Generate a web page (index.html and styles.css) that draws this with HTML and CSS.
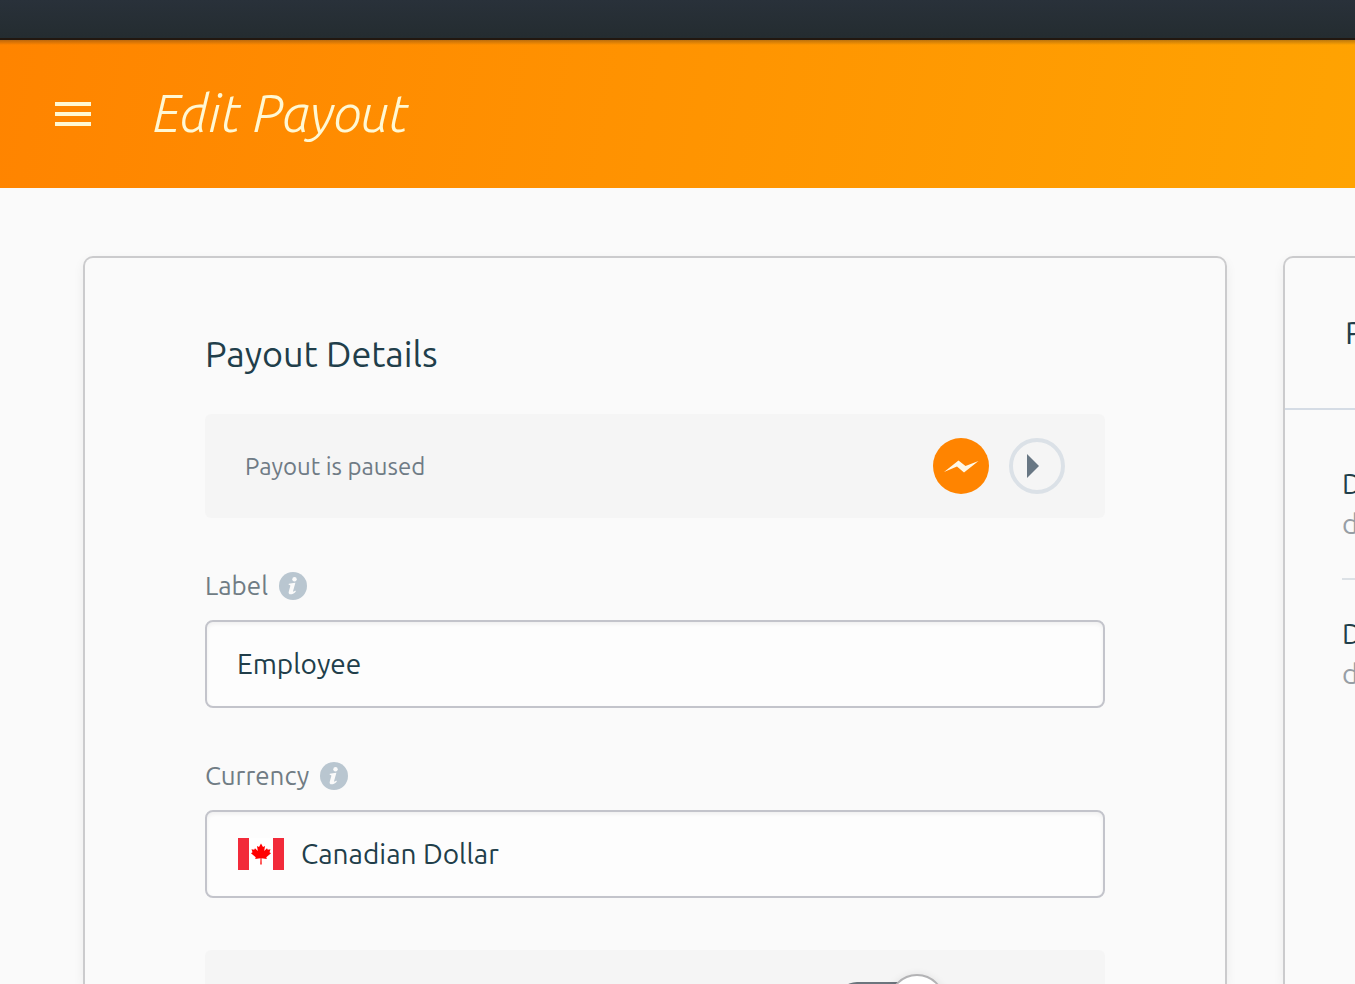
FILE: index.html
```html
<!DOCTYPE html>
<html lang="en">
<head>
<meta charset="utf-8">
<title>Edit Payout</title>
<link rel="stylesheet" href="styles.css">
</head>
<body>
<div class="topbar"></div>
<header class="header">
  <button class="menu" type="button" aria-label="Menu">
    <svg width="36" height="24" viewBox="0 0 36 24"><path fill="currentColor" d="M0 0h36v4H0zM0 10h36v4H0zM0 20h36v4H0z"/></svg>
  </button>
  <h1 class="title">Edit Payout</h1>
</header>
<main class="layout">
  <section class="card details">
    <h2 class="heading">Payout Details</h2>
    <div class="panel status">
      <span class="status-text">Payout is paused</span>
      <button class="round instant" type="button" aria-label="Instant payout">
        <svg width="56" height="56" viewBox="0 0 56 56"><path fill="#fff8e6" d="M11 34 L25.500 22.500 L32.500 28 L45.500 23 L31 34.500 L24 28.500z"/></svg>
      </button>
      <button class="round play" type="button" aria-label="Resume payout">
        <svg width="56" height="56" viewBox="0 0 56 56"><circle cx="28" cy="28" r="26" fill="none" stroke="#dbe1e7" stroke-width="4"/><path fill="#687784" d="M18 16v24l12-12z"/></svg>
      </button>
    </div>
    <div class="field">
      <div class="label-row">
        <label for="label">Label</label>
        <svg class="info" width="28" height="28" viewBox="0 0 28 28"><circle cx="14" cy="14" r="14" fill="#b9c6d0"/><circle cx="15.500" cy="7.200" r="2.200" fill="#fafafa"/><path fill="#fafafa" d="M9.800 11.800c2-.2 3.800-.7 6.600-1l-2.300 8.200c-.2.900.3 1 2.200-.4l.6.800c-2.200 2.200-3.600 2.900-5.200 2.900-1.800 0-2.400-1.200-1.900-2.900l1.500-5.400c.2-.8-.1-1-1.700-1.200z"/></svg>
      </div>
      <div class="control"><input class="input" id="label" type="text" value="Employee"></div>
    </div>
    <div class="field">
      <div class="label-row">
        <label for="currency">Currency</label>
        <svg class="info" width="28" height="28" viewBox="0 0 28 28"><circle cx="14" cy="14" r="14" fill="#b9c6d0"/><circle cx="15.500" cy="7.200" r="2.200" fill="#fafafa"/><path fill="#fafafa" d="M9.800 11.800c2-.2 3.800-.7 6.600-1l-2.300 8.200c-.2.900.3 1 2.200-.4l.6.800c-2.200 2.200-3.600 2.900-5.200 2.900-1.800 0-2.400-1.200-1.900-2.900l1.500-5.400c.2-.8-.1-1-1.700-1.200z"/></svg>
      </div>
      <div class="control">
        <svg class="flag" width="47" height="32" viewBox="-1 0 47 32"><path fill="#fff" d="M0 0h46v32H0z"/><path fill="#f22b3a" d="M0 0h11v32H0zM35 0h11v32H35z"/><path fill="#f00" d="M23 5.500l2 3.500 2-1-.8 5 2.800-2.800.8 1.600 2.700-.5-1 3 1.500.9-4.700 4 .5 1.800-5.300-.8.2 6.300h-1.400l.2-6.300-5.300.8.500-1.800-4.700-4 1.500-.9-1-3 2.700.5.800-1.600 2.800 2.800-.8-5 2 1z"/></svg>
        <select class="input" id="currency"><option>Canadian Dollar</option></select>
      </div>
    </div>
    <div class="panel option">
      <input class="toggle" type="checkbox" role="switch" aria-label="Option" checked>
    </div>
  </section>
  <aside class="card side">
    <h2 class="side-title">P</h2>
    <dl class="facts">
      <div class="fact"><dt>D</dt><dd>d</dd></div>
      <div class="fact"><dt>D</dt><dd>d</dd></div>
    </dl>
  </aside>
</main>
</body>
</html>
```
FILE: styles.css
```css
* { box-sizing: border-box; }

body {
  margin: 0;
  height: 100vh;
  overflow: hidden;
  display: flex;
  flex-direction: column;
  background: #fafafa;
  color: #213e4a;
  font-family: Ubuntu, "Noto Sans", "Open Sans", sans-serif;
}

h1, h2, dl, dd { margin: 0; font-weight: 400; }

button {
  display: block;
  border: 0;
  padding: 0;
  background: none;
  cursor: pointer;
}

svg { display: block; flex: none; }

.topbar {
  flex: none;
  height: 40px;
  background: linear-gradient(#29313a, #242c30);
  border-bottom: 2px solid #211710;
}

.header {
  flex: none;
  display: flex;
  align-items: center;
  gap: 62px;
  height: 148px;
  padding: 0 55px;
  color: #fff8d4;
  background:
    linear-gradient(rgba(90, 60, 30, 0.4), rgba(90, 60, 30, 0) 5px),
    linear-gradient(100deg, #ff8400, #ffa302);
}

.menu { color: inherit; }

.title {
  font-size: 52px;
  line-height: 60px;
  font-style: italic;
  font-weight: 300;
  padding-bottom: 2px;
}

.layout {
  flex: 1;
  min-height: 0;
  display: grid;
  grid-template-columns: minmax(0, 1fr) 72px;
  gap: 56px;
  padding: 68px 0 0 83px;
}

.card {
  border: 2px solid #cbcbcd;
  border-bottom: 0;
  border-radius: 10px 10px 0 0;
  box-shadow: 0 4px 12px rgba(0, 0, 0, 0.06);
  overflow: hidden;
}

.details { padding: 74px 120px 0; }

.heading {
  font-size: 36px;
  line-height: 44px;
  margin-bottom: 38px;
}

.panel {
  display: flex;
  align-items: center;
  background: #f5f5f5;
  border-radius: 6px;
}

.status {
  height: 104px;
  padding: 0 40px;
  gap: 20px;
  margin-bottom: 52px;
}

.status-text {
  flex: 1;
  padding-top: 2px;
  font-size: 24px;
  line-height: 32px;
  color: #6f7b85;
}

.round {
  width: 56px;
  height: 56px;
  border-radius: 50%;
}

.instant { background: #ff8400; }

.field { margin-bottom: 52px; }

.label-row {
  display: flex;
  align-items: center;
  gap: 11px;
  height: 32px;
  margin-bottom: 18px;
  font-size: 26px;
  line-height: 32px;
  color: #707c84;
}

.control {
  display: flex;
  align-items: center;
  gap: 17px;
  height: 88px;
  padding: 0 30px;
  background: #fdfdfd;
  border: 2px solid #c3c4cb;
  border-radius: 8px;
  box-shadow: inset 0 2px 4px rgba(0, 0, 0, 0.06);
}

.input {
  flex: 1;
  min-width: 0;
  height: 40px;
  padding: 0;
  border: 0;
  outline: 0;
  appearance: none;
  background: none;
  color: inherit;
  font: 28px/40px Ubuntu, "Noto Sans", "Open Sans", sans-serif;
}

.option {
  height: 104px;
  padding: 0 160px;
  justify-content: flex-end;
}

.toggle {
  appearance: none;
  display: flex;
  align-items: center;
  justify-content: flex-end;
  width: 108px;
  height: 40px;
  margin: 0;
  border-radius: 20px;
  background: #6c757d;
}

.toggle::before {
  content: "";
  width: 56px;
  height: 56px;
  flex: none;
  border: 2px solid #b3b3b5;
  border-radius: 50%;
  background: #fff;
  box-shadow: 0 2px 10px rgba(0, 0, 0, 0.12);
}

.option .toggle { height: 40px; }

.option .toggle::before { width: 52px; height: 52px; }

.side {
  border-right: 0;
  border-top-right-radius: 0;
  white-space: nowrap;
}

.side-title {
  height: 152px;
  padding-left: 60px;
  font-size: 32px;
  line-height: 148px;
  border-bottom: 2px solid #d5dce5;
}

.facts { padding-left: 57px; }

.fact {
  padding: 54px 0 34px;
  font-size: 28px;
  line-height: 40px;
}

.fact + .fact {
  border-top: 2px solid #dce1e6;
  padding-top: 34px;
}

.fact dd { color: #979ea5; }
```
